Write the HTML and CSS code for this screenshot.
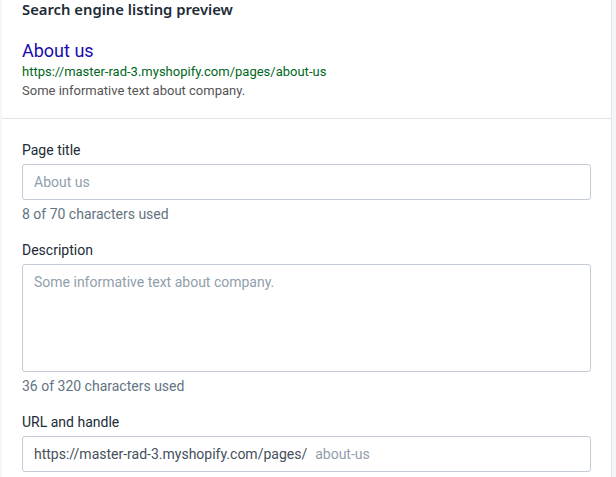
FILE: index.html
```html
<!DOCTYPE html>
<html>
<head>
<meta charset="utf-8">
<link rel="stylesheet" href="styles.css">
</head>
<body>
<div class="card">
  <section class="preview">
    <h2 class="heading">Search engine listing preview</h2>
    <div class="serp">
      <div class="serp-title">About us</div>
      <div class="serp-url">https://master-rad-3.myshopify.com/pages/about-us</div>
      <div class="serp-desc">Some informative text about company.</div>
    </div>
  </section>
  <section class="fields">
    <div class="field">
      <label class="label">Page title</label>
      <div class="input">About us</div>
      <div class="help">8 of 70 characters used</div>
    </div>
    <div class="field">
      <label class="label">Description</label>
      <div class="input textarea">Some informative text about company.</div>
      <div class="help">36 of 320 characters used</div>
    </div>
    <div class="field">
      <label class="label">URL and handle</label>
      <div class="input url"><span class="prefix">https://master-rad-3.myshopify.com/pages/</span><span class="handle">about-us</span></div>
    </div>
  </section>
</div>
</body>
</html>
```
FILE: styles.css
```css
html, body {
  margin: 0;
  padding: 0;
  background: #f4f6f8;
  height: 100%;
  overflow: hidden;
}
body {
  font-family: Roboto, "Noto Sans", sans-serif;
  color: #212b36;
}
.card {
  margin-left: 2px;
  width: 609px;
  background: #fff;
  border-right: 1px solid #e3e6e9;
  min-height: 477px;
}
.preview {
  padding: 0 20px 18px 20px;
  border-bottom: 1px solid #dfe3e8;
}
.heading {
  margin: 0;
  font-family: "Noto Sans", sans-serif;
  font-size: 14.8px;
  font-weight: 600;
  line-height: 18px;
  color: #212b36;
}
.serp {
  margin-top: 22px;
}
.serp-title {
  font-size: 18px;
  line-height: 22px;
  color: #1a0dab;
}
.serp-url {
  font-size: 13px;
  line-height: 19px;
  color: #006621;
}
.serp-desc {
  font-size: 13px;
  line-height: 19px;
  color: #545454;
}
.fields {
  padding: 21px 20px 0 20px;
}
.field {
  margin-bottom: 16px;
}
.label {
  display: block;
  font-size: 14px;
  line-height: 20px;
  margin-bottom: 4px;
  color: #212b36;
}
.input {
  box-sizing: border-box;
  width: 569px;
  height: 36px;
  border: 1px solid #c4cdd5;
  border-radius: 3px;
  padding: 6px 11px;
  font-size: 14px;
  line-height: 22px;
  color: #919eab;
}
.textarea {
  height: 108px;
}
.help {
  margin-top: 4px;
  font-size: 14px;
  line-height: 20px;
  color: #637381;
}
.prefix {
  color: #454f5b;
  margin-right: 8px;
}
.handle {
  color: #919eab;
}
```
